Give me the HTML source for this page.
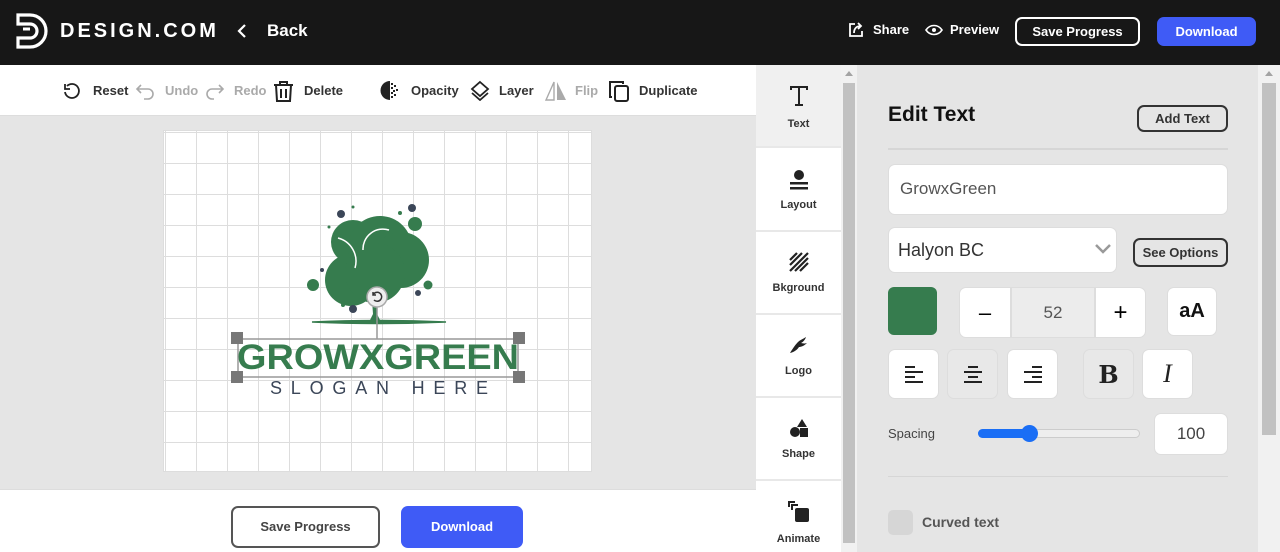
<!DOCTYPE html>
<html style="width:1280px;height:552px;overflow:hidden"><head><meta charset="utf-8"><style>
*{box-sizing:border-box;margin:0;padding:0}
body{width:1280px;height:552px;overflow:hidden;font-family:"Liberation Sans",sans-serif;background:#e5e5e5;position:relative}
.abs{position:absolute}
.hdr{left:0;top:0;width:1280px;height:65px;background:#171717;color:#fff}
.b{font-weight:bold}
.tb{left:0;top:65px;width:756px;height:51px;background:#fff;border-bottom:1px solid #ddd}
.tbi{position:absolute;top:0;height:51px;display:flex;align-items:center;font-size:13px;font-weight:bold;color:#333}
.dis{color:#aaa}
.canvas{left:163px;top:130px;width:429px;height:342px;background-color:#fff;
background-image:linear-gradient(#ddd 1px,transparent 1px),linear-gradient(90deg,#ddd 1px,transparent 1px);
background-size:31px 31px;background-position:0 1px,1px 0;border:1px solid #ddd}
.bot{left:0;top:489px;width:756px;height:63px;background:#fff;border-top:1px solid #ddd}
.side{left:756px;top:65px;width:85px;height:487px;background:#fff}
.si{position:absolute;left:0;width:85px;height:83px;border-bottom:2px solid #e8e8e8;text-align:center;font-size:11px;font-weight:bold;color:#333}
.si svg{display:block;margin:20px auto 8px}
.panel{left:857px;top:65px;width:401px;height:487px;background:#e5e5e5}
.box{position:absolute;background:#fff;border-radius:7px;border:1px solid #ddd}
.btn{position:absolute;background:#fff;border:1px solid #ddd;border-radius:7px;display:flex;align-items:center;justify-content:center}
</style></head><body>
<div class="abs hdr">
 <svg class="abs" style="left:16px;top:13px" width="32" height="36" viewBox="0 0 32 36"><path d="M2 2h12a16 16 0 0 1 0 32H2V25h12a7 7 0 0 0 0-14H2z" fill="none" stroke="#fff" stroke-width="3.2"/><path d="M7 16h7" stroke="#fff" stroke-width="3"/></svg>
 <div class="abs" style="left:60px;top:20px;font-size:20px;letter-spacing:3px;font-weight:bold">DESIGN.COM</div>
 <svg class="abs" style="left:236px;top:22px" width="12" height="18"><path d="M9 3L3 9l6 6" fill="none" stroke="#fff" stroke-width="2.2"/></svg>
 <div class="abs b" style="left:267px;top:21px;font-size:17px">Back</div>
 <svg class="abs" style="left:848px;top:22px" width="16" height="16"><path d="M7 2H2v12h12V9" fill="none" stroke="#fff" stroke-width="1.8"/><path d="M6 11c0-5 3-7 7-7M10 1l3 3-3 3" fill="none" stroke="#fff" stroke-width="1.8"/></svg>
 <div class="abs b" style="left:873px;top:22px;font-size:13px">Share</div>
 <svg class="abs" style="left:925px;top:24px" width="18" height="12"><path d="M1 6c4-6 12-6 16 0c-4 6-12 6-16 0z" fill="none" stroke="#fff" stroke-width="1.6"/><circle cx="9" cy="6" r="2" fill="#fff"/></svg>
 <div class="abs b" style="left:950px;top:22px;font-size:13px">Preview</div>
 <div class="abs b" style="left:1015px;top:17px;width:125px;height:29px;border:2px solid #fff;border-radius:7px;font-size:13px;text-align:center;line-height:25px">Save Progress</div>
 <div class="abs b" style="left:1157px;top:17px;width:99px;height:29px;background:#3f5bf6;border-radius:7px;font-size:13px;text-align:center;line-height:29px">Download</div>
</div>
<div class="abs tb">
 <div class="tbi" style="left:62px"><svg width="20" height="20"><path d="M5 5a7 7 0 1 1-2 6M3 3v5h5" fill="none" stroke="#222" stroke-width="1.8"/></svg><span style="margin-left:11px">Reset</span></div>
 <div class="tbi dis" style="left:135px"><svg width="22" height="20"><path d="M6 4L2 8l4 4M2 8h11a5 5 0 0 1 0 10H9" fill="none" stroke="#aaa" stroke-width="1.6"/></svg><span style="margin-left:8px">Undo</span></div>
 <div class="tbi dis" style="left:203px"><svg width="22" height="20"><path d="M16 4l4 4-4 4M20 8H9a5 5 0 0 0 0 10h2" fill="none" stroke="#aaa" stroke-width="1.6"/></svg><span style="margin-left:9px">Redo</span></div>
 <div class="tbi" style="left:273px"><svg width="21" height="22"><path d="M1 5h19M7 5V2h7v3M3 5l1 16h13l1-16M8 9v9M13 9v9" fill="none" stroke="#222" stroke-width="2"/></svg><span style="margin-left:10px">Delete</span></div>
 <div class="tbi" style="left:380px"><svg width="21" height="21"><path d="M10 1a9.5 9.5 0 0 0 0 19z" fill="#222"/><g fill="#222"><rect x="11" y="3" width="2" height="2"/><rect x="14" y="5" width="2" height="2"/><rect x="11" y="7" width="2" height="2"/><rect x="16" y="9" width="2" height="2"/><rect x="13" y="10" width="2" height="2"/><rect x="11" y="12" width="2" height="2"/><rect x="14" y="14" width="2" height="2"/><rect x="11" y="16" width="2" height="2"/></g></svg><span style="margin-left:10px">Opacity</span></div>
 <div class="tbi" style="left:470px"><svg width="21" height="21"><path d="M10 2l8 7-8 7-8-7z M2 13l8 7 8-7" fill="none" stroke="#222" stroke-width="1.8"/></svg><span style="margin-left:8px">Layer</span></div>
 <div class="tbi dis" style="left:544px"><svg width="24" height="22"><path d="M10 2L2 20h8z" fill="none" stroke="#aaa" stroke-width="1.4"/><path d="M13 2l9 18h-9z" fill="#aaa"/></svg><span style="margin-left:7px">Flip</span></div>
 <div class="tbi" style="left:607px"><svg width="24" height="24"><path d="M5 18H3V3h13v2" fill="none" stroke="#222" stroke-width="2"/><rect x="8" y="7" width="13" height="15" rx="2" fill="none" stroke="#222" stroke-width="2"/></svg><span style="margin-left:8px">Duplicate</span></div>
</div>
<div class="abs canvas"></div>
<svg class="abs" style="left:163px;top:130px" width="429" height="342">
 <g fill="#367c4e">
  <circle cx="190" cy="112" r="22"/><circle cx="217" cy="118" r="32"/><circle cx="238" cy="130" r="28"/><circle cx="188" cy="150" r="26"/><circle cx="212" cy="143" r="30"/>
  <circle cx="252" cy="94" r="7"/><circle cx="190" cy="77" r="1.5"/><circle cx="237" cy="83" r="2"/><circle cx="150" cy="155" r="6"/><circle cx="265" cy="155" r="4.5"/><circle cx="180" cy="175" r="2"/><circle cx="166" cy="97" r="1.5"/>
 </g>
 <g fill="#3b4658"><circle cx="178" cy="84" r="4"/><circle cx="249" cy="78" r="4"/><circle cx="159" cy="140" r="2"/><circle cx="255" cy="163" r="3"/><circle cx="190" cy="179" r="4"/></g>
 <path d="M175 108a24 24 0 0 1 17 30M200 120a20 20 0 0 1 26-20" fill="none" stroke="#fff" stroke-width="1.5"/>
 <path d="M149 192Q214 189 283 192Q214 195 149 192z" fill="#367c4e" stroke="#367c4e" stroke-width="1.5"/>
 <path d="M209 170l1 14-4 8h12l-4-8 1-14z" fill="#367c4e"/>
 <line x1="214" y1="175" x2="214" y2="209" stroke="#999" stroke-width="1.5"/>
 <circle cx="214" cy="167" r="10" fill="#eee" stroke="#aaa" stroke-width="1.5"/>
 <path d="M210 165a4.5 4.5 0 1 1 1 5M210 162v3h3" fill="none" stroke="#333" stroke-width="1.5"/>
 <rect x="75" y="209" width="280" height="38" fill="none" stroke="#999" stroke-width="1.5"/>
 <g fill="#777"><rect x="68" y="202" width="12" height="12"/><rect x="350" y="202" width="12" height="12"/><rect x="68" y="241" width="12" height="12"/><rect x="350" y="241" width="12" height="12"/></g>
 <text x="74" y="239" textLength="282" lengthAdjust="spacingAndGlyphs" font-family="Liberation Sans" font-weight="bold" font-size="35" fill="#367c4e">GROWXGREEN</text>
 <text x="107" y="264" textLength="218" lengthAdjust="spacing" font-family="Liberation Sans" font-size="18" fill="#3b4658">SLOGAN HERE</text>
</svg>
<div class="abs bot">
 <div class="abs" style="left:231px;top:16px;width:149px;height:42px;border:2px solid #555;border-radius:7px;font-size:13px;font-weight:bold;color:#444;text-align:center;line-height:38px">Save Progress</div>
 <div class="abs" style="left:401px;top:16px;width:122px;height:42px;background:#3f5bf6;border-radius:7px;font-size:13px;font-weight:bold;color:#fff;text-align:center;line-height:42px">Download</div>
</div>
<div class="abs side">
 <div class="si" style="top:0;background:#f0f0f0"><svg width="20" height="22" style="margin-top:20px;margin-bottom:11px"><path d="M2 5V2h16v3M10 2v18M6 20h8" fill="none" stroke="#222" stroke-width="2"/></svg>Text</div>
 <div class="si" style="top:84px"><svg width="20" height="22"><circle cx="10" cy="6" r="5" fill="#222"/><rect x="1" y="13" width="18" height="2.5" fill="#222"/><rect x="1" y="18" width="18" height="2.5" fill="#222"/></svg>Layout</div>
 <div class="si" style="top:167px"><svg width="20" height="20" style="margin-bottom:10px"><path d="M1 8L8 1M1 13L13 1M1 19L19 1M6 19L19 6M11 19L19 11" stroke="#222" stroke-width="2.2"/></svg>Bkground</div>
 <div class="si" style="top:250px"><svg width="22" height="20" style="margin-bottom:10px"><path d="M2 18c4-1 7-3 9-6 2 0 5-1 8-4-3 1-5 0-6 0 2-1 4-3 5-6-3 2-6 3-8 5-2 2-5 6-8 11z" fill="#222"/></svg>Logo</div>
 <div class="si" style="top:333px"><svg width="20" height="20" style="margin-bottom:10px"><path d="M13 1l5 8h-10z" fill="#222"/><circle cx="6" cy="14" r="5" fill="#222"/><rect x="11" y="10" width="8" height="9" fill="#222"/></svg>Shape</div>
 <div class="si" style="top:416px;border:none"><svg width="22" height="22" style="margin-bottom:10px"><path d="M1 6V1h6M4 9V4h6" fill="none" stroke="#222" stroke-width="2"/><rect x="7" y="7" width="14" height="14" rx="2" fill="#222"/></svg>Animate</div>
</div>
<div class="abs" style="left:841px;top:65px;width:16px;height:487px;background:#f1f1f1"><div class="abs" style="left:2px;top:18px;width:12px;height:460px;background:#c1c1c1"></div><svg class="abs" style="left:4px;top:6px" width="8" height="5"><path d="M0 5L4 0 8 5z" fill="#a3a3a3"/></svg></div>
<div class="abs" style="left:1258px;top:65px;width:22px;height:487px;background:#f1f1f1"><div class="abs" style="left:4px;top:18px;width:14px;height:352px;background:#c1c1c1"></div><svg class="abs" style="left:7px;top:6px" width="8" height="5"><path d="M0 5L4 0 8 5z" fill="#a3a3a3"/></svg></div>
<div class="abs panel">
 <div class="abs b" style="left:31px;top:38px;font-size:21px;color:#111">Edit Text</div>
 <div class="abs b" style="left:280px;top:40px;width:91px;height:27px;border:2px solid #333;border-radius:7px;font-size:13px;color:#333;text-align:center;line-height:23px">Add Text</div>
 <div class="abs" style="left:31px;top:83px;width:340px;height:2px;background:#d6d6d6"></div>
 <div class="box" style="left:31px;top:99px;width:340px;height:51px;padding:14px 11px;font-size:17px;color:#555">GrowxGreen</div>
 <div class="box" style="left:31px;top:162px;width:229px;height:46px;padding:12px 9px;font-size:18px;color:#333">Halyon BC<svg class="abs" style="left:206px;top:16px" width="16" height="10"><path d="M1 1l7 7 7-7" fill="none" stroke="#999" stroke-width="2.5"/></svg></div>
 <div class="abs b" style="left:276px;top:173px;width:95px;height:29px;border:2px solid #333;border-radius:7px;font-size:13px;color:#333;text-align:center;line-height:25px">See Options</div>
 <div class="abs" style="left:31px;top:222px;width:49px;height:48px;background:#367c4e;border-radius:6px"></div>
 <div class="btn" style="left:102px;top:222px;width:52px;height:51px;border-radius:7px 0 0 7px;font-size:22px">–</div>
 <div class="btn" style="left:154px;top:222px;width:84px;height:51px;border-radius:0;background:#ececec;font-size:17px;color:#555">52</div>
 <div class="btn" style="left:238px;top:222px;width:51px;height:51px;border-radius:0 7px 7px 0;font-size:24px">+</div>
 <div class="btn b" style="left:310px;top:222px;width:50px;height:49px;font-size:20px;color:#111">aA</div>
 <div class="btn" style="left:31px;top:284px;width:51px;height:50px"><svg width="20" height="18"><path d="M1 2h10M1 7h18M1 12h10M1 17h18" stroke="#222" stroke-width="2"/></svg></div>
 <div class="btn" style="left:90px;top:284px;width:51px;height:50px;background:#e8e8e8"><svg width="20" height="18"><path d="M5 2h10M1 7h18M5 12h10M1 17h18" stroke="#222" stroke-width="2"/></svg></div>
 <div class="btn" style="left:150px;top:284px;width:51px;height:50px"><svg width="20" height="18"><path d="M9 2h10M1 7h18M9 12h10M1 17h18" stroke="#222" stroke-width="2"/></svg></div>
 <div class="btn" style="left:226px;top:284px;width:51px;height:50px;background:#e8e8e8;font-family:'DejaVu Serif',serif;font-weight:bold;font-size:24px;color:#222">B</div>
 <div class="btn" style="left:285px;top:284px;width:51px;height:50px;font-family:'Liberation Serif',serif;font-style:italic;font-size:26px;color:#222">I</div>
 <div class="abs" style="left:31px;top:361px;font-size:13px;color:#444">Spacing</div>
 <div class="abs" style="left:121px;top:364px;width:162px;height:9px;background:#eee;border:1px solid #ccc;border-radius:5px"></div>
 <div class="abs" style="left:121px;top:364px;width:52px;height:9px;background:#1a6ef5;border-radius:5px"></div>
 <div class="abs" style="left:164px;top:360px;width:17px;height:17px;background:#1a6ef5;border-radius:50%"></div>
 <div class="box" style="left:297px;top:348px;width:74px;height:42px;font-size:17px;color:#444;text-align:center;line-height:40px">100</div>
 <div class="abs" style="left:31px;top:411px;width:340px;height:1px;background:#d6d6d6"></div>
 <div class="abs" style="left:31px;top:445px;width:25px;height:25px;background:#d6d6d6;border-radius:5px"></div>
 <div class="abs b" style="left:65px;top:449px;font-size:14px;color:#555">Curved text</div>
</div>
</body></html>
